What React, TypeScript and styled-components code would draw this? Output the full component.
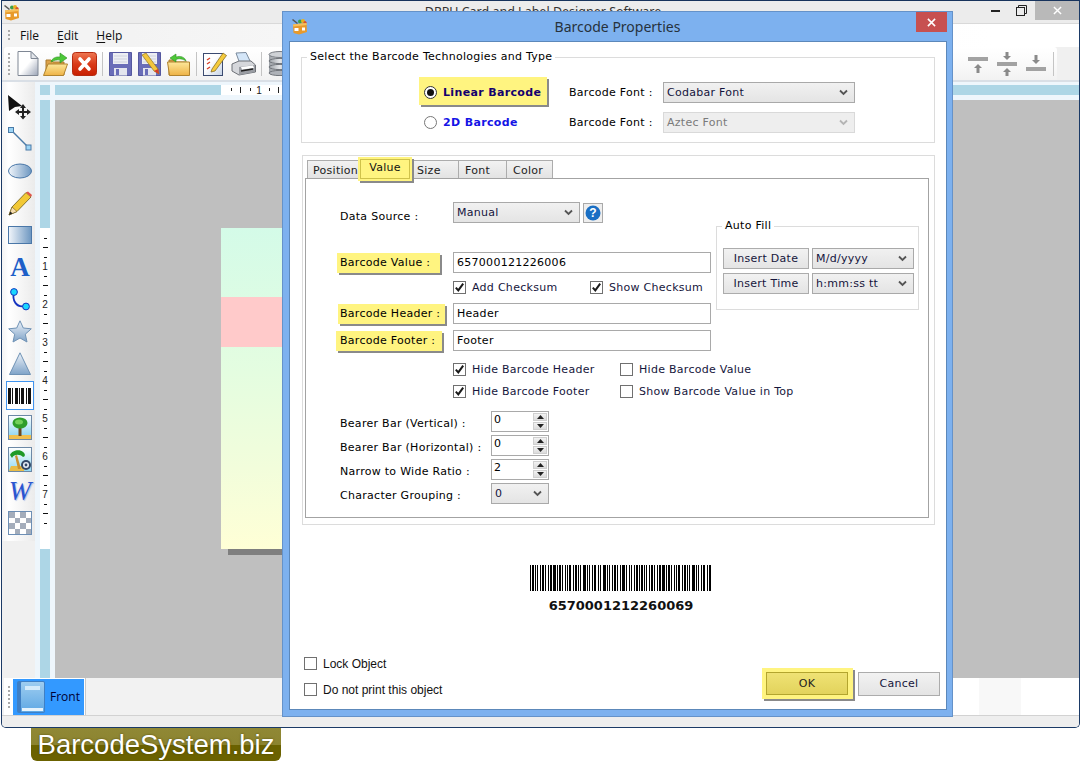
import React from "react";
import styled, { createGlobalStyle } from "styled-components";

const Global = createGlobalStyle`
  html, body { margin: 0; padding: 0; background: #fff; overflow: hidden; }
  #root { width: 1081px; height: 761px; }
  * { box-sizing: border-box; }
`;

const Page = styled.div`
  position: relative;
  width: 1081px;
  height: 761px;
  font-family: "DejaVu Sans", Verdana, sans-serif;
  font-size: 11px;
  letter-spacing: 0.28px;
  color: #000;
  background: #fff;
`;

const AppWindow = styled.div`
  margin-left: 1px;
  width: 1079px;
  height: 728px;
  border: 1px solid #1b3a66;
  border-top-color: #17335c;
  border-radius: 0 0 5px 5px;
  display: flex;
  flex-direction: column;
  overflow: hidden;
  background: #f0f0f0;
  letter-spacing: 0;
`;

const TitleBar = styled.div`
  flex: none;
  height: 23px;
  display: grid;
  grid-template-columns: 1fr auto 1fr;
  background: #ececec;
  border-bottom: 1px solid #d9d9d9;
`;
const TitleIconSlot = styled.div`
  padding: 3px 0 0 2px;
`;
const AppTitle = styled.div`
  font-family: "Noto Sans", sans-serif;
  font-size: 12.5px;
  line-height: 21px;
  color: #333;
  padding-left: 5px;
`;
const WinControls = styled.div`
  justify-self: end;
  display: flex;
  align-items: flex-start;
`;
const WinBtn = styled.div<{ $w: number; $bg?: string }>`
  width: ${(p) => p.$w}px;
  height: 19px;
  display: flex;
  align-items: center;
  justify-content: center;
  background: ${(p) => p.$bg || "transparent"};
`;

const MenuBar = styled.div`
  flex: none;
  height: 23px;
  display: flex;
  align-items: center;
  padding-left: 6px;
  font-family: "Open Sans", sans-serif;
  font-size: 12px;
  color: #101010;
  background: linear-gradient(to right, #f3f3f3 0, #f3f3f3 12%, #f9f9f9 40%, #fff 92%);
`;
const Grip = styled.div<{ $h: number }>`
  flex: none;
  width: 2px;
  height: ${(p) => p.$h}px;
  background: repeating-linear-gradient(to bottom, #aaa 0 2px, transparent 2px 4px);
`;
const MenuItem = styled.span<{ $ml: number }>`
  margin-left: ${(p) => p.$ml}px;
  u { text-decoration-thickness: 1px; text-underline-offset: 2px; }
`;

const ToolBar = styled.div`
  flex: none;
  height: 33px;
  margin: 0 22px 0 2px;
  padding-left: 4px;
  display: flex;
  align-items: center;
  border-radius: 3px 3px 0 0;
  background: linear-gradient(to bottom, #fff 0, #fbfbfb 40%, #f2f2f2 100%);
`;
const ToolSlot = styled.div<{ $w?: number; $ml?: number }>`
  flex: none;
  width: ${(p) => p.$w || 29}px;
  margin-left: ${(p) => p.$ml || 0}px;
  height: 28px;
  display: flex;
  align-items: center;
  justify-content: center;
`;
const Sep = styled.div<{ $mx: number }>`
  flex: none;
  width: 1px;
  height: 24px;
  margin: 0 ${(p) => p.$mx}px;
  background: #c4c4c4;
`;
const Spacer = styled.div`
  flex: 1;
`;
const BarRule = styled.div`
  flex: none;
  height: 2px;
  background: #d9dfe6;
`;

const Main = styled.div`
  flex: 1;
  min-height: 0;
  display: flex;
  background: #eef6fc;
`;
const ToolColumn = styled.div`
  flex: none;
  width: 33px;
  background: #f0f0f0;
`;
const ToolBox = styled.div`
  height: 459px;
  padding-top: 9px;
  background: linear-gradient(to right, #f4f4f4 0, #fff 20%, #ebebeb 100%);
`;
const ToolCell = styled.div<{ $sel?: boolean }>`
  width: 28px;
  height: ${(p) => (p.$sel ? 29 : 32)}px;
  margin: ${(p) => (p.$sel ? "2px 0 1px 4px" : "0 0 0 4px")};
  display: flex;
  align-items: center;
  justify-content: center;
  border: ${(p) => (p.$sel ? "1px solid #3f94ef" : "none")};
  background: ${(p) => (p.$sel ? "#fff" : "transparent")};
`;

const Workspace = styled.div`
  flex: 1;
  display: grid;
  grid-template-columns: 10px 5px 1fr;
  grid-template-rows: 10px 5px 1fr;
  padding: 3px 0 0 5px;
`;
const Corner = styled.div`
  background: #add6e6;
`;
const HRuler = styled.div`
  grid-column: 3;
  grid-row: 1;
  display: flex;
  background: #add6e6;
`;
const VRuler = styled.div`
  grid-column: 1;
  grid-row: 3;
  display: flex;
  flex-direction: column;
  background: #add6e6;
`;
const RulerBlue = styled.div<{ $w?: number; $h?: number }>`
  flex: none;
  width: ${(p) => (p.$w ? p.$w + "px" : "auto")};
  height: ${(p) => (p.$h ? p.$h + "px" : "auto")};
`;
const Canvas = styled.div`
  grid-column: 3;
  grid-row: 3;
  position: relative;
  background: #bfbfbf;
`;
const Card = styled.div`
  position: absolute;
  left: 166px;
  top: 128px;
  width: 500px;
  height: 321px;
  box-shadow: 7px 6px 0 #7f7f7f;
  background: linear-gradient(to bottom, #d4fbe8 0, #e4fde0 45%, #f2fddb 75%, #ffffd6 100%);
`;
const PinkBand = styled.div`
  margin-top: 69px;
  height: 50px;
  background: #ffcaca;
`;

const BottomBar = styled.div`
  flex: none;
  height: 37px;
  display: flex;
  padding-left: 2px;
  background: linear-gradient(to right, #f2f2f2 0 88.3%, #fff 88.3% 90.7%, #f8f8f8 90.7% 94.6%, #fff 94.6%);
`;
const TabDock = styled.div`
  width: 82px;
  display: flex;
  align-items: center;
  padding-left: 4px;
  background: #fff;
  border-right: 1px solid #c9c9c9;
`;
const FrontTab = styled.div`
  margin: 0 0 0 3px;
  width: 71px;
  height: 36px;
  display: flex;
  align-items: center;
  gap: 5px;
  padding-left: 4px;
  background: #3399ff;
  font-family: "Open Sans", sans-serif;
  font-size: 12px;
  color: #000033;
`;
const StatusBar = styled.div`
  flex: none;
  height: 12px;
  background: #eeeeee;
  border-top: 1px solid #d2d2d2;
`;

const Watermark = styled.div`
  margin-left: 31px;
  width: 250px;
  height: 33px;
  border-radius: 0 0 6px 6px;
  background: linear-gradient(to bottom, #908835 0, #8c8430 50%, #6b6200 50%, #6b6200 100%);
  color: #fff;
  font-family: "Liberation Sans", Arial, sans-serif;
  font-size: 27.5px;
  letter-spacing: 0;
  line-height: 33px;
  text-align: center;
  text-shadow: 0 0 2px rgba(60, 55, 0, 0.8);
`;

const Dialog = styled.div`
  position: absolute;
  left: 282px;
  top: 11px;
  width: 671px;
  height: 706px;
  border: 1px solid #6592c9;
  background: #7db1ef;
  display: flex;
  flex-direction: column;
`;
const DialogTitleBar = styled.div`
  flex: none;
  height: 29px;
  display: grid;
  grid-template-columns: 1fr auto 1fr;
`;
const DialogIconSlot = styled.div`
  padding: 6px 0 0 9px;
`;
const DialogTitle = styled.div`
  font-family: "Noto Sans", sans-serif;
  font-size: 14px;
  letter-spacing: 0;
  line-height: 30px;
  color: #26323d;
`;
const CloseBtn = styled.div`
  justify-self: end;
  margin-right: 5px;
  width: 31px;
  height: 20px;
  display: flex;
  align-items: center;
  justify-content: center;
  background: #c75050;
`;
const DialogBody = styled.div`
  flex: 1;
  margin: 0 5px 6px 6px;
  display: flex;
  flex-direction: column;
  background: #fff;
  border: 1px solid #5c88ba;
  min-height: 0;
`;

const Group = styled.div`
  position: relative;
  border: 1px solid #dcdcdc;
`;
const Legend = styled.div<{ $l: number }>`
  position: absolute;
  top: -8px;
  left: ${(p) => p.$l}px;
  padding: 0 3px;
  line-height: 14px;
  background: #fff;
  white-space: nowrap;
`;
const TypeGroup = styled(Group)`
  margin: 15px 0 0 11px;
  width: 634px;
  height: 86px;
  padding: 19px 0 0 117px;
`;
const TypeRow = styled.div`
  height: 30px;
  display: grid;
  grid-template-columns: 150px 94px 192px;
  align-items: center;
`;
const RadioLabel = styled.div<{ $on?: boolean }>`
  display: flex;
  align-items: center;
  gap: 6px;
  padding-left: 5px;
  padding-top: ${(p) => (p.$on ? 2 : 0)}px;
  width: 128px;
  height: 28px;
  margin-bottom: ${(p) => (p.$on ? 3 : 0)}px;
  font-weight: 700;
  letter-spacing: 0.35px;
  color: ${(p) => (p.$on ? "#14006e" : "#1414e6")};
  background: ${(p) => (p.$on ? "#fff480" : "transparent")};
  box-shadow: ${(p) => (p.$on ? "2px 2px 0 #8a8a8a" : "none")};
`;
const RadioOuter = styled.span<{ $on?: boolean }>`
  flex: none;
  width: 13px;
  height: 13px;
  border-radius: 50%;
  border: 1px solid ${(p) => (p.$on ? "#333" : "#777")};
  background: #fff;
  display: flex;
  align-items: center;
  justify-content: center;
  &::after {
    content: "";
    display: ${(p) => (p.$on ? "block" : "none")};
    width: 7px;
    height: 7px;
    border-radius: 50%;
    background: #111;
  }
`;

const SelectBox = styled.div<{ $w: number; $off?: boolean }>`
  width: ${(p) => p.$w}px;
  height: 21px;
  padding: 0 6px 0 3px;
  display: flex;
  align-items: center;
  justify-content: space-between;
  white-space: nowrap;
  border: 1px solid ${(p) => (p.$off ? "#d9d9d9" : "#a9a9a9")};
  background: ${(p) => (p.$off ? "#eeeeee" : "linear-gradient(to bottom, #f1f1f1, #e4e4e4)")};
  color: ${(p) => (p.$off ? "#7a7a7a" : "#14143c")};
`;

const PropsGroup = styled(Group)`
  margin: 12px 0 0 12px;
  width: 633px;
  height: 370px;
  padding: 4px 0 0 2px;
`;
const TabStrip = styled.div`
  height: 18px;
  margin-left: 2px;
  display: flex;
  align-items: flex-end;
  position: relative;
  z-index: 1;
`;
const Tab = styled.div<{ $w: number; $pl: number }>`
  width: ${(p) => p.$w}px;
  height: 18px;
  margin-right: -1px;
  padding-left: ${(p) => p.$pl}px;
  line-height: 19px;
  border: 1px solid #acacac;
  border-bottom: none;
  background: linear-gradient(to bottom, #f2f2f2, #e3e3e3);
  color: #222;
`;
const ActiveTab = styled.div`
  flex: none;
  width: 54px;
  height: 24px;
  margin: 0 0 -3px -2px;
  position: relative;
  z-index: 2;
  text-align: center;
  line-height: 22px;
  background: #fff480;
  box-shadow: inset 0 0 0 2px #fff480, inset 0 0 0 3px #cfc24a, 2px 2px 0 #8a8a8a;
  color: #111;
`;
const TabPanel = styled.div`
  width: 624px;
  height: 340px;
  border: 1px solid #a3a3a3;
  padding-left: 34px;
`;
const TopArea = styled.div`
  display: flex;
`;
const Fields = styled.div`
  width: 371px;
`;
const Row = styled.div<{ $mt: number; $col?: number }>`
  margin-top: ${(p) => p.$mt}px;
  height: 21px;
  display: grid;
  grid-template-columns: ${(p) => p.$col || 113}px 1fr;
  align-items: center;
`;
const InlineGroup = styled.div`
  display: flex;
  align-items: center;
  gap: 3px;
`;
const FieldLabel = styled.div<{ $low?: number }>`
  white-space: nowrap;
  padding-top: ${(p) => p.$low || 0}px;
`;
const Marked = styled.div<{ $w: number; $ml?: number }>`
  width: ${(p) => p.$w}px;
  height: 20px;
  margin-left: ${(p) => p.$ml ?? -3}px;
  padding-left: ${(p) => 0 - (p.$ml ?? -3)}px;
  line-height: 20px;
  background: #fff480;
  box-shadow: 2px 2px 0 #8a8a8a;
  white-space: nowrap;
`;
const TextInput = styled.div`
  width: 258px;
  height: 21px;
  padding-left: 3px;
  line-height: 20px;
  border: 1px solid #a9a9a9;
  background: #fff;
`;
const HelpBtn = styled.div`
  width: 20px;
  height: 20px;
  border: 1px solid #a9a9a9;
  background: #eee;
  display: flex;
  align-items: center;
  justify-content: center;
  color: #fff;
`;
const CheckWrap = styled.div<{ $w?: number; $sans?: boolean }>`
  width: ${(p) => (p.$w ? p.$w + "px" : "auto")};
  display: flex;
  align-items: center;
  gap: 6px;
  white-space: nowrap;
  color: #16163c;
  ${(p) => (p.$sans ? `font-family: "Liberation Sans", Arial, sans-serif; font-size: 12px; letter-spacing: 0; color: #111;` : "")}
`;
const CheckBox = styled.span`
  flex: none;
  width: 13px;
  height: 13px;
  border: 1px solid #707070;
  background: #fff;
  display: flex;
  align-items: center;
  justify-content: center;
`;
const CheckRow = styled.div`
  display: flex;
`;
const AutoFill = styled(Group)`
  margin: 47px 0 0 5px;
  width: 203px;
  height: 84px;
  padding: 21px 0 0 6px;
`;
const AutoGrid = styled.div`
  display: grid;
  grid-template-columns: 86px 102px;
  grid-auto-rows: 21px;
  column-gap: 3px;
  row-gap: 4px;
`;
const PlainBtn = styled.div<{ $w?: number; $h?: number }>`
  width: ${(p) => (p.$w ? p.$w + "px" : "auto")};
  height: ${(p) => (p.$h ? p.$h + "px" : "21px")};
  display: flex;
  align-items: center;
  justify-content: center;
  border: 1px solid #acacac;
  background: linear-gradient(to bottom, #f2f2f2, #e4e4e4);
  color: #16163c;
`;
const SpinBox = styled.div`
  width: 58px;
  height: 21px;
  display: flex;
  justify-content: space-between;
  padding: 1px 1px 1px 2px;
  border: 1px solid #a9a9a9;
  background: #fff;
  line-height: 14px;
`;
const SpinBtns = styled.div`
  width: 14px;
  display: flex;
  flex-direction: column;
  gap: 1px;
`;
const SpinBtn = styled.div`
  flex: 1;
  display: flex;
  align-items: center;
  justify-content: center;
  background: linear-gradient(to bottom, #f2f2f2, #dcdcdc);
  border: 1px solid #cfcfcf;
`;

const BarcodeArea = styled.div`
  margin-top: 40px;
  display: flex;
  flex-direction: column;
  align-items: center;
  padding-left: 4px;
`;
const BarcodeDigits = styled.div`
  margin-top: 7px;
  padding-left: 2px;
  font-weight: 700;
  font-size: 13px;
  letter-spacing: 0;
  line-height: 16px;
  color: #111;
`;

const Footer = styled.div`
  margin-top: auto;
  padding: 0 6px 9px 14px;
  display: flex;
  align-items: flex-end;
  justify-content: space-between;
`;
const FooterChecks = styled.div`
  display: flex;
  flex-direction: column;
  gap: 5px;
`;
const FooterCheckRow = styled.div`
  height: 21px;
  display: flex;
  align-items: center;
`;
const FooterBtns = styled.div`
  display: flex;
  align-items: center;
  gap: 5px;
  margin-bottom: 1px;
`;
const OkHalo = styled.div`
  padding: 4px 5px 4px 4px;
  background: #fff480;
  box-shadow: 2px 2px 0 #8a8a8a;
`;
const OkBtn = styled.div`
  width: 82px;
  height: 23px;
  display: flex;
  align-items: center;
  justify-content: center;
  border: 1px solid #b3a52e;
  background: linear-gradient(to bottom, #efe274, #e2d35c);
  color: #222;
`;

const Chevron = ({ off }: { off?: boolean }) => (
  <svg width="9" height="7" viewBox="0 0 9 7">
    <path d="M1 1.5 L4.5 5 L8 1.5" fill="none" stroke={off ? "#b4b4b4" : "#555"} strokeWidth="1.8" />
  </svg>
);

const CheckMark = () => (
  <svg width="11" height="11" viewBox="0 0 11 11">
    <path d="M1.8 5.6 L4.3 8.4 L9.2 1.6" fill="none" stroke="#1a1a1a" strokeWidth="2" />
  </svg>
);

const Check = ({ on, label, w, sans }: { on?: boolean; label: string; w?: number; sans?: boolean }) => (
  <CheckWrap $w={w} $sans={sans}>
    <CheckBox>{on && <CheckMark />}</CheckBox>
    {label}
  </CheckWrap>
);

const Select = ({ w, text, off }: { w: number; text: string; off?: boolean }) => (
  <SelectBox $w={w} $off={off}>
    <span>{text}</span>
    <Chevron off={off} />
  </SelectBox>
);

const Spinner = ({ v }: { v: string }) => (
  <SpinBox>
    <span>{v}</span>
    <SpinBtns>
      <SpinBtn>
        <svg width="7" height="4" viewBox="0 0 7 4"><path d="M3.5 0 L7 4 L0 4 Z" fill="#222" /></svg>
      </SpinBtn>
      <SpinBtn>
        <svg width="7" height="4" viewBox="0 0 7 4"><path d="M0 0 L7 0 L3.5 4 Z" fill="#222" /></svg>
      </SpinBtn>
    </SpinBtns>
  </SpinBox>
);

const AppIcon = () => (
  <svg width="16" height="17" viewBox="0 0 16 17">
    <path d="M1 1 L6 5 L5 6 L0 2 Z" fill="#555" />
    <circle cx="8" cy="3.5" r="2" fill="#3aa04a" />
    <circle cx="11" cy="3" r="2" fill="#e8b020" />
    <circle cx="13" cy="4.5" r="1.6" fill="#d8502a" />
    <path d="M1 6.5 L14.5 5 L15 14 L7 16.5 L1.5 15 Z" fill="#e89a2c" />
    <path d="M1 6.5 L14.5 5 L14.7 7 L1.2 8.5 Z" fill="#f6c05c" />
    <rect x="2.5" y="10" width="4" height="3" fill="#fff" />
    <rect x="10" y="9.5" width="3" height="3" fill="#fff" />
  </svg>
);

const DocIcon = () => (
  <svg width="22" height="25" viewBox="0 0 22 25">
    <defs>
      <linearGradient id="dg" x1="0" y1="0" x2="1" y2="1">
        <stop offset="0.5" stopColor="#fff" />
        <stop offset="1" stopColor="#9aa3b5" />
      </linearGradient>
    </defs>
    <path d="M1 .5 H14 L21 7.5 V24.5 H1 Z" fill="url(#dg)" stroke="#7f8794" />
    <path d="M14 .5 V7.5 H21 Z" fill="#e2e5ea" stroke="#7f8794" />
  </svg>
);

const FolderIcon = ({ flip }: { flip?: boolean }) => (
  <svg width="25" height="25" viewBox="0 0 25 25">
    <defs>
      <linearGradient id="fg" x1="0" y1="0" x2="0" y2="1">
        <stop offset="0" stopColor="#fde79a" />
        <stop offset="1" stopColor="#eeb245" />
      </linearGradient>
    </defs>
    <path d="M3 9 H8 L10 11 H21 V24 H3 Z" fill="#dca24a" stroke="#a97a2c" />
    <path d={flip ? "M1.5 11 H23.5 V24.5 H3.5 Z" : "M5 13 H24.5 L20.5 24.5 H.5 Z"} fill="url(#fg)" stroke="#b0832f" />
    <path
      d={flip ? "M20 10 C19 6 14 4.5 10 6 L10 3 L4 7 L10 11 L10 8.5 C13 7 17 8 20 10 Z" : "M8 11 C9 7 13 5.5 17 6 L17 2 L24 7 L17 12 L17 9 C14 8.5 11 9.5 8 11 Z"}
      fill="#4cc838"
      stroke="#2f8f22"
      strokeWidth="0.6"
    />
  </svg>
);

const CloseIcon = () => (
  <svg width="25" height="24" viewBox="0 0 25 24">
    <defs>
      <linearGradient id="xg" x1="0" y1="0" x2="0" y2="1">
        <stop offset="0" stopColor="#ee7752" />
        <stop offset="0.5" stopColor="#d93a18" />
        <stop offset="1" stopColor="#c81e00" />
      </linearGradient>
    </defs>
    <rect x=".5" y=".5" width="24" height="23" rx="3" fill="url(#xg)" stroke="#b52a10" />
    <path d="M8 7 L17 17 M17 7 L8 17" stroke="#fff" strokeWidth="3.6" strokeLinecap="round" />
  </svg>
);

const SaveIcon = ({ pencil }: { pencil?: boolean }) => (
  <svg width="23" height="24" viewBox="0 0 23 24">
    <path d="M.5 .5 H22.5 V23.5 H.5 Z" fill="#6a6db8" stroke="#55589f" />
    <rect x="4" y="1" width="15" height="11" fill="#eceef3" />
    <path d="M5 4 H18 M5 7 H18 M5 10 H18" stroke="#cfd2de" />
    <rect x="5" y="16" width="13" height="7.5" fill="#e3e5ee" />
    <rect x="7" y="17" width="3" height="6" fill="#6a6db8" />
    {pencil && (
      <>
        <path d="M4 3 L8 1 L20 17 L21 22 L16 19 Z" fill="#f3c63c" stroke="#8f7420" strokeWidth="0.7" />
        <path d="M16 19 L21 22 L20 17 Z" fill="#d83a2a" />
      </>
    )}
  </svg>
);

const NoteIcon = () => (
  <svg width="24" height="25" viewBox="0 0 24 25">
    <defs>
      <linearGradient id="ng" x1="0" y1="0" x2="1" y2="1">
        <stop offset="0.4" stopColor="#fff" />
        <stop offset="1" stopColor="#c5d2e4" />
      </linearGradient>
    </defs>
    <rect x=".5" y="2.5" width="19" height="22" fill="url(#ng)" stroke="#3b4a70" />
    <path d="M4 9 L7 7 M4 13 L7 11 M4 18 L7 16" stroke="#d8402a" strokeWidth="1.4" />
    <path d="M9 18 L20 2 L23.5 4.5 L12 20 L8 21 Z" fill="#f5cb3c" stroke="#7c6318" strokeWidth="0.7" />
  </svg>
);

const PrinterIcon = () => (
  <svg width="25" height="24" viewBox="0 0 25 24">
    <path d="M5 1 L15 0.5 L20 11 L9 12 Z" fill="#d4e6f8" stroke="#7a8a9c" />
    <path d="M1 12 L8 9 H20 L24.5 13 V20 L8 23 L1 19 Z" fill="#d5d7db" stroke="#6d7076" />
    <path d="M8 15 L24 13 V20 L8 23 Z" fill="#9a9da3" />
    <path d="M10 15 L22 13.5 L23 16 L11 17.5 Z" fill="#fff" />
    <path d="M10 19 L22 17" stroke="#222" strokeWidth="1.4" />
  </svg>
);

const DbIcon = () => (
  <svg width="24" height="25" viewBox="0 0 24 25">
    <defs>
      <linearGradient id="db" x1="0" y1="0" x2="1" y2="0">
        <stop offset="0" stopColor="#9ba0a6" />
        <stop offset="0.5" stopColor="#e5e7ea" />
        <stop offset="1" stopColor="#7d8288" />
      </linearGradient>
    </defs>
    <rect x="1" y="3" width="22" height="19" fill="url(#db)" />
    <ellipse cx="12" cy="3.5" rx="11" ry="3" fill="#cfd2d6" stroke="#787c82" />
    <ellipse cx="12" cy="10" rx="11" ry="2.6" fill="none" stroke="#70747a" />
    <ellipse cx="12" cy="16" rx="11" ry="2.6" fill="none" stroke="#70747a" />
    <ellipse cx="12" cy="22" rx="11" ry="2.6" fill="#aeb2b8" stroke="#70747a" />
  </svg>
);

const AlignIcon = ({ kind }: { kind: "top" | "mid" | "bot" }) => (
  <svg width="22" height="24" viewBox="0 0 22 24">
    {kind === "top" && (
      <>
        <rect x="1" y="5" width="20" height="4" fill="#a2a2a2" />
        <path d="M11 12 L15 16 H12.5 V21 H9.5 V16 H7 Z" fill="#8a8a8a" />
      </>
    )}
    {kind === "mid" && (
      <>
        <rect x="1" y="10" width="20" height="4" fill="#a2a2a2" />
        <path d="M11 8 L15 4 H12.5 V0 H9.5 V4 H7 Z" fill="#8a8a8a" />
        <path d="M11 16 L15 20 H12.5 V24 H9.5 V20 H7 Z" fill="#8a8a8a" />
      </>
    )}
    {kind === "bot" && (
      <>
        <rect x="1" y="15" width="20" height="4" fill="#a2a2a2" />
        <path d="M11 12 L15 8 H12.5 V3 H9.5 V8 H7 Z" fill="#8a8a8a" />
      </>
    )}
  </svg>
);

const shapeGrad = (
  <defs>
    <linearGradient id="sg" x1="0" y1="0" x2="1" y2="0">
      <stop offset="0" stopColor="#f2f6fb" />
      <stop offset="1" stopColor="#6c96c0" />
    </linearGradient>
    <linearGradient id="sv" x1="0" y1="0" x2="0" y2="1">
      <stop offset="0" stopColor="#eef3f9" />
      <stop offset="1" stopColor="#7fa3c8" />
    </linearGradient>
  </defs>
);

const PointerTool = () => (
  <svg width="24" height="25" viewBox="0 0 24 25">
    <path d="M0 0 L14 11 L7 12 L1 16 Z" fill="#111" />
    <path d="M15 9 L18 13 H16 V16 H19 V14 L23 17 L19 20 V18 H16 V21 H18 L15 24.5 L12 21 H14 V18 H11 V20 L7 17 L11 14 V16 H14 V13 H12 Z" fill="#222" />
  </svg>
);
const LineTool = () => (
  <svg width="24" height="24" viewBox="0 0 24 24">
    <path d="M4 4 L20 20" stroke="#4a7ba8" strokeWidth="1.5" />
    <rect x=".5" y=".5" width="5" height="5" fill="#9bd4f5" stroke="#4a7ba8" />
    <rect x="18" y="18" width="5" height="5" fill="#9bd4f5" stroke="#4a7ba8" />
  </svg>
);
const EllipseTool = () => (
  <svg width="24" height="16" viewBox="0 0 24 16">
    {shapeGrad}
    <ellipse cx="12" cy="8" rx="11.5" ry="7" fill="url(#sg)" stroke="#4a77a8" />
  </svg>
);
const PencilTool = () => (
  <svg width="24" height="25" viewBox="0 0 24 25">
    <path d="M1 24 L4 16 L18 1.5 L23 6 L9 20.5 Z" fill="#f2c835" stroke="#6b5a1a" strokeWidth="0.8" />
    <path d="M18 1.5 L20 0.5 L24 4 L23 6 Z" fill="#e0564a" />
    <path d="M1 24 L4 16 L9 20.5 Z" fill="#f5dcae" stroke="#6b5a1a" strokeWidth="0.6" />
    <path d="M1 24 L2.4 20.5 L4.5 22.4 Z" fill="#222" />
  </svg>
);
const RectTool = () => (
  <svg width="24" height="18" viewBox="0 0 24 18">
    {shapeGrad}
    <rect x=".5" y=".5" width="23" height="17" fill="url(#sg)" stroke="#4a77a8" />
  </svg>
);
const GlyphA = styled.span`
  font-family: "Liberation Serif", serif;
  font-weight: 700;
  font-size: 27px;
  line-height: 26px;
  color: #1d5fc8;
`;
const GlyphW = styled.span`
  font-family: "Liberation Serif", serif;
  font-style: italic;
  font-size: 27px;
  line-height: 26px;
  color: #2a55d0;
  text-shadow: 1px 1px 1px #a9bce8;
`;
const CurveTool = () => (
  <svg width="20" height="23" viewBox="0 0 20 23">
    <path d="M4 5 C2 12 6 20 15 18" fill="none" stroke="#1634c0" strokeWidth="1.8" />
    <circle cx="4" cy="4" r="3.4" fill="#19d7ff" stroke="#1634c0" />
    <circle cx="16" cy="18.5" r="3.4" fill="#19d7ff" stroke="#1634c0" />
  </svg>
);
const StarTool = () => (
  <svg width="24" height="23" viewBox="0 0 24 23">
    {shapeGrad}
    <path d="M12 .8 L15.3 8 L23.3 8.8 L17.3 14.2 L19 22 L12 18 L5 22 L6.7 14.2 L.7 8.8 L8.7 8 Z" fill="url(#sv)" stroke="#6f92b5" />
  </svg>
);
const TriangleTool = () => (
  <svg width="22" height="23" viewBox="0 0 22 23">
    {shapeGrad}
    <path d="M11 .8 L21.5 22.5 H.5 Z" fill="url(#sv)" stroke="#6f92b5" />
  </svg>
);
const BarcodeTool = () => {
  const xs = [0, 2, 4, 7, 9, 11, 13, 15, 18, 20, 22];
  return (
    <svg width="24" height="16" viewBox="0 0 24 16" shapeRendering="crispEdges">
      {xs.map((x, i) => (
        <rect key={x} x={x} y="0" width={i % 3 === 0 ? 1.5 : 1} height="16" fill="#111" />
      ))}
    </svg>
  );
};
const PictureTool = () => (
  <svg width="24" height="25" viewBox="0 0 24 25">
    <defs>
      <linearGradient id="pk" x1="0" y1="0" x2="0" y2="1">
        <stop offset="0" stopColor="#fff" />
        <stop offset="1" stopColor="#7fd0f0" />
      </linearGradient>
    </defs>
    <rect x=".5" y=".5" width="23" height="24" fill="url(#pk)" stroke="#6c88a6" strokeWidth="1" />
    <rect x="1" y="20" width="22" height="4" fill="#f0c050" />
    <rect x="10.5" y="12" width="3" height="9" fill="#6d4a1f" />
    <ellipse cx="12" cy="8" rx="7.5" ry="5.5" fill="#2f9e2a" />
    <ellipse cx="11" cy="7" rx="4" ry="2.5" fill="#73d05a" />
  </svg>
);
const PictureDiskTool = () => (
  <svg width="24" height="25" viewBox="0 0 24 25">
    <defs>
      <linearGradient id="pk2" x1="0" y1="0" x2="0" y2="1">
        <stop offset="0" stopColor="#fff" />
        <stop offset="1" stopColor="#8fd8f2" />
      </linearGradient>
    </defs>
    <rect x=".5" y=".5" width="23" height="24" fill="url(#pk2)" stroke="#6c88a6" />
    <path d="M1 24 L3 19 H16 V24 Z" fill="#e8bc48" />
    <path d="M9 8 L13 22 H10 L7 9 Z" fill="#c9902e" />
    <path d="M2 8 C4 3 12 2 15 5 C18 7 17 10 15 10 C12 7 6 7 4 11 Z" fill="#1f9a28" />
    <circle cx="18" cy="18" r="5" fill="#334766" />
    <circle cx="18" cy="18" r="3" fill="#e8edf5" />
    <circle cx="18" cy="18" r="1.4" fill="#334766" />
  </svg>
);
const CheckerTool = () => {
  const cells: [number, number][] = [];
  for (let r = 0; r < 4; r++) for (let c = 0; c < 4; c++) if ((r + c) % 2 === 0) cells.push([c, r]);
  return (
    <svg width="24" height="24" viewBox="0 0 24 24" shapeRendering="crispEdges">
      <rect x=".5" y=".5" width="23" height="23" fill="#fff" stroke="#6d8fb5" />
      {cells.map(([c, r]) => (
        <rect key={c + "-" + r} x={1 + c * 5.5} y={1 + r * 5.5} width="5.5" height="5.5" fill="#a4adbb" />
      ))}
    </svg>
  );
};
const BookIcon = () => (
  <svg width="28" height="32" viewBox="0 0 28 32">
    <defs>
      <linearGradient id="bk" x1="0" y1="0" x2="0" y2="1">
        <stop offset="0" stopColor="#9ecdf0" />
        <stop offset="1" stopColor="#5fa8e4" />
      </linearGradient>
    </defs>
    <rect x="0" y="0" width="28" height="32" rx="2" fill="#3f7fc4" />
    <rect x="4" y="1" width="23" height="30" rx="1" fill="url(#bk)" />
    <rect x="8" y="5" width="15" height="4" fill="#d5ebfa" />
    <rect x="5" y="27" width="21" height="3" fill="#e6f3fc" />
  </svg>
);

const HelpIcon = () => (
  <svg width="16" height="16" viewBox="0 0 16 16">
    <circle cx="8" cy="8" r="7.5" fill="#1a6fc4" />
    <text x="8" y="12" textAnchor="middle" fontFamily="Liberation Sans, sans-serif" fontWeight="700" fontSize="12" fill="#fff">?</text>
  </svg>
);

const XGlyph = ({ s = 10, w = 2 }: { s?: number; w?: number }) => (
  <svg width={s} height={s} viewBox="0 0 10 10">
    <path d="M1 1 L9 9 M9 1 L1 9" stroke="#fff" strokeWidth={w} />
  </svg>
);

const barPattern = [
  1, 1, 2, 1, 1, 1, 1, 2, 1, 1, 2, 1, 1, 2, 1, 1, 2, 1, 3, 1, 1, 1, 2, 1, 1, 2, 1, 1, 1, 1, 2, 2, 1, 1, 2, 1, 1, 1, 1, 2,
  3, 1, 1, 1, 1, 2, 1, 1, 2, 2, 1, 1, 1, 2, 3, 1, 1, 1, 1, 2, 1, 1, 2, 1, 1, 2, 1, 1, 3, 1, 1, 2, 1, 1, 1, 2, 1, 1, 2, 1,
];
const BarcodeGraphic = () => {
  const bars: React.ReactElement[] = [];
  let x = 0;
  let i = 0;
  while (x < 178) {
    const w = barPattern[i % barPattern.length];
    if (i % 2 === 0) bars.push(<rect key={i} x={x} y="0" width={w} height="26" fill="#000" />);
    x += w;
    i += 1;
  }
  return (
    <svg width="181" height="26" viewBox="0 0 181 26" shapeRendering="crispEdges">
      {bars}
      <rect x="179" y="0" width="2" height="26" fill="#000" />
    </svg>
  );
};

const HRulerArt = () => {
  const t = [];
  for (let i = 1; i < 7; i++) {
    const x = i * 9.5;
    if (i % 4 === 0) continue;
    t.push(<rect key={i} x={Math.round(x)} y={i % 2 === 0 ? 2 : 3} width="1" height={i % 2 === 0 ? 6 : 3} fill="#222" />);
  }
  return (
    <svg width="732" height="10" viewBox="0 0 732 10">
      <rect width="732" height="10" fill="#fff" />
      {t}
      <text x="38" y="9" textAnchor="middle" fontFamily="Liberation Sans, sans-serif" fontSize="10" fill="#222">1</text>
    </svg>
  );
};

const VRulerArt = () => {
  const t = [];
  for (let i = 1; i <= 31; i++) {
    if (i % 4 === 0) continue;
    const y = Math.round(i * 9.5);
    t.push(<rect key={i} x={i % 2 === 0 ? 3 : 4} y={y} width={i % 2 === 0 ? 5 : 3} height="1" fill="#111" />);
  }
  return (
    <svg width="10" height="321" viewBox="0 0 10 321" style={{ display: "block" }}>
      <rect width="10" height="321" fill="#fff" />
      {t}
      {[1, 2, 3, 4, 5, 6, 7].map((n) => (
        <text key={n} x="5" y={38 * n + 4} textAnchor="middle" fontFamily="Liberation Sans, sans-serif" fontSize="10" fill="#222">{n}</text>
      ))}
    </svg>
  );
};

const tools: React.ReactNode[] = [
  <PointerTool />, <LineTool />, <EllipseTool />, <PencilTool />, <RectTool />, <GlyphA>A</GlyphA>, <CurveTool />, <StarTool />, <TriangleTool />,
];
const tools2: React.ReactNode[] = [<PictureTool />, <PictureDiskTool />, <GlyphW>W</GlyphW>, <CheckerTool />];

export default function App() {
  return (
    <Page>
      <Global />
      <AppWindow>
        <TitleBar>
          <TitleIconSlot><AppIcon /></TitleIconSlot>
          <AppTitle>DRPU Card and Label Designer Software</AppTitle>
          <WinControls>
            <WinBtn $w={24}>
              <svg width="9" height="3" viewBox="0 0 9 3"><rect width="9" height="2" y="1" fill="#222" /></svg>
            </WinBtn>
            <WinBtn $w={28}>
              <svg width="11" height="11" viewBox="0 0 11 11">
                <rect x="0.5" y="2.5" width="8" height="8" fill="#ececec" stroke="#222" />
                <path d="M2.5 2.5 V.5 H10.5 V8.5 H8.5" fill="none" stroke="#222" />
              </svg>
            </WinBtn>
            <WinBtn $w={44} $bg="#b9b9b9"><XGlyph s={9} w={1.6} /></WinBtn>
          </WinControls>
        </TitleBar>
        <MenuBar>
          <Grip $h={11} />
          <MenuItem $ml={10}>File</MenuItem>
          <MenuItem $ml={18}><u>E</u>dit</MenuItem>
          <MenuItem $ml={18}><u>H</u>elp</MenuItem>
        </MenuBar>
        <ToolBar>
          <Grip $h={22} />
          <ToolSlot $w={26} $ml={5}><DocIcon /></ToolSlot>
          <ToolSlot><FolderIcon /></ToolSlot>
          <ToolSlot><CloseIcon /></ToolSlot>
          <Sep $mx={3} />
          <ToolSlot><SaveIcon /></ToolSlot>
          <ToolSlot><SaveIcon pencil /></ToolSlot>
          <ToolSlot><FolderIcon flip /></ToolSlot>
          <Sep $mx={3} />
          <ToolSlot><NoteIcon /></ToolSlot>
          <ToolSlot><PrinterIcon /></ToolSlot>
          <Sep $mx={3} />
          <ToolSlot><DbIcon /></ToolSlot>
          <Spacer />
          <ToolSlot><AlignIcon kind="top" /></ToolSlot>
          <ToolSlot><AlignIcon kind="mid" /></ToolSlot>
          <ToolSlot><AlignIcon kind="bot" /></ToolSlot>
          <Sep $mx={3} />
        </ToolBar>
        <BarRule />
        <Main>
          <ToolColumn>
            <ToolBox>
              {tools.map((t, i) => <ToolCell key={i}>{t}</ToolCell>)}
              <ToolCell $sel><BarcodeTool /></ToolCell>
              {tools2.map((t, i) => <ToolCell key={i}>{t}</ToolCell>)}
            </ToolBox>
          </ToolColumn>
          <Workspace>
            <Corner />
            <HRuler>
              <RulerBlue $w={166} />
              <HRulerArt />
            </HRuler>
            <VRuler>
              <RulerBlue $h={128} />
              <VRulerArt />
            </VRuler>
            <Canvas>
              <Card><PinkBand /></Card>
            </Canvas>
          </Workspace>
        </Main>
        <BottomBar>
          <TabDock>
            <Grip $h={22} />
            <FrontTab><BookIcon />Front</FrontTab>
          </TabDock>
        </BottomBar>
        <StatusBar />
      </AppWindow>
      <Watermark>BarcodeSystem.biz</Watermark>

      <Dialog>
        <DialogTitleBar>
          <DialogIconSlot><AppIcon /></DialogIconSlot>
          <DialogTitle>Barcode Properties</DialogTitle>
          <CloseBtn><XGlyph s={9} w={1.7} /></CloseBtn>
        </DialogTitleBar>
        <DialogBody>
          <TypeGroup>
            <Legend $l={5}>Select the Barcode Technologies and Type</Legend>
            <TypeRow>
              <RadioLabel $on><RadioOuter $on />Linear Barcode</RadioLabel>
              <FieldLabel>Barcode Font :</FieldLabel>
              <Select w={192} text="Codabar Font" />
            </TypeRow>
            <TypeRow>
              <RadioLabel><RadioOuter />2D Barcode</RadioLabel>
              <FieldLabel>Barcode Font :</FieldLabel>
              <Select w={192} text="Aztec Font" off />
            </TypeRow>
          </TypeGroup>

          <PropsGroup>
            <TabStrip>
              <Tab $w={54} $pl={5}>Position</Tab>
              <ActiveTab>Value</ActiveTab>
              <Tab $w={47} $pl={4}>Size</Tab>
              <Tab $w={49} $pl={6}>Font</Tab>
              <Tab $w={47} $pl={6}>Color</Tab>
            </TabStrip>
            <TabPanel>
              <TopArea>
                <Fields>
                  <Row $mt={23}>
                    <FieldLabel $low={8}>Data Source :</FieldLabel>
                    <InlineGroup>
                      <Select w={127} text="Manual" />
                      <HelpBtn><HelpIcon /></HelpBtn>
                    </InlineGroup>
                  </Row>
                  <Row $mt={29}>
                    <Marked $w={103}>Barcode Value :</Marked>
                    <TextInput>657000121226006</TextInput>
                  </Row>
                  <Row $mt={4}>
                    <span />
                    <CheckRow>
                      <Check on label="Add Checksum" w={137} />
                      <Check on label="Show Checksum" />
                    </CheckRow>
                  </Row>
                  <Row $mt={5}>
                    <Marked $w={107} $ml={-2}>Barcode Header :</Marked>
                    <TextInput>Header</TextInput>
                  </Row>
                  <Row $mt={6}>
                    <Marked $w={106} $ml={-4}>Barcode Footer :</Marked>
                    <TextInput>Footer</TextInput>
                  </Row>
                </Fields>
                <AutoFill>
                  <Legend $l={5}>Auto Fill</Legend>
                  <AutoGrid>
                    <PlainBtn>Insert Date</PlainBtn>
                    <Select w={102} text="M/d/yyyy" />
                    <PlainBtn>Insert Time</PlainBtn>
                    <Select w={102} text="h:mm:ss tt" />
                  </AutoGrid>
                </AutoFill>
              </TopArea>
              <Row $mt={8}>
                <span />
                <CheckRow>
                  <Check on label="Hide Barcode Header" w={167} />
                  <Check label="Hide Barcode Value" />
                </CheckRow>
              </Row>
              <Row $mt={1}>
                <span />
                <CheckRow>
                  <Check on label="Hide Barcode Footer" w={167} />
                  <Check label="Show Barcode Value in Top" />
                </CheckRow>
              </Row>
              <Row $mt={9} $col={151}>
                <FieldLabel $low={3}>Bearer Bar (Vertical) :</FieldLabel>
                <Spinner v="0" />
              </Row>
              <Row $mt={3} $col={151}>
                <FieldLabel $low={3}>Bearer Bar (Horizontal) :</FieldLabel>
                <Spinner v="0" />
              </Row>
              <Row $mt={3} $col={151}>
                <FieldLabel $low={3}>Narrow to Wide Ratio :</FieldLabel>
                <Spinner v="2" />
              </Row>
              <Row $mt={3} $col={151}>
                <FieldLabel $low={3}>Character Grouping :</FieldLabel>
                <Select w={58} text="0" />
              </Row>
            </TabPanel>
          </PropsGroup>

          <BarcodeArea>
            <BarcodeGraphic />
            <BarcodeDigits>6570001212260069</BarcodeDigits>
          </BarcodeArea>

          <Footer>
            <FooterChecks>
              <FooterCheckRow><Check sans label="Lock Object" /></FooterCheckRow>
              <FooterCheckRow><Check sans label="Do not print this object" /></FooterCheckRow>
            </FooterChecks>
            <FooterBtns>
              <OkHalo><OkBtn>OK</OkBtn></OkHalo>
              <PlainBtn $w={82} $h={24}>Cancel</PlainBtn>
            </FooterBtns>
          </Footer>
        </DialogBody>
      </Dialog>
    </Page>
  );
}
